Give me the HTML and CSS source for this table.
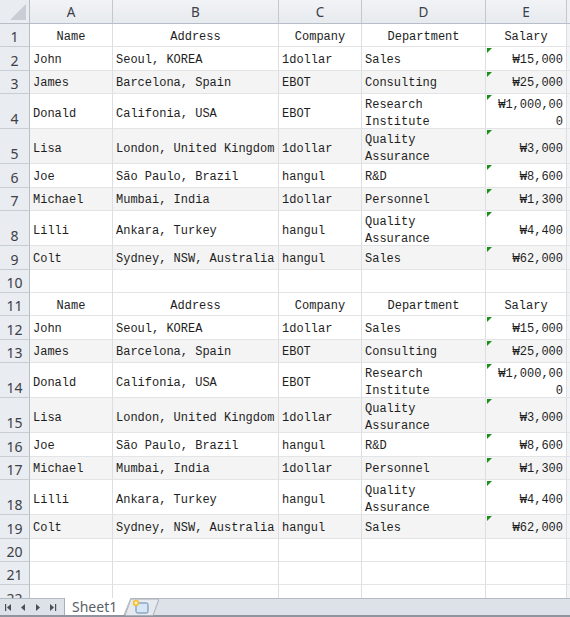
FILE: index.html
```html
<!DOCTYPE html>
<html>
<head>
<meta charset="utf-8">
<link rel="stylesheet" href="styles.css">
</head>
<body>
<div class="app">
  <div class="sheet">
    <div class="row head">
      <div class="corner"><span class="corner-tri"></span></div>
      <div class="colh">A</div><div class="colh">B</div><div class="colh">C</div><div class="colh">D</div><div class="colh">E</div><div class="colh end"></div>
    </div>

    <div class="row"><div class="rh">1</div><div class="c center">Name</div><div class="c center">Address</div><div class="c center">Company</div><div class="c center">Department</div><div class="c center">Salary</div><div class="c end"></div></div>
    <div class="row"><div class="rh">2</div><div class="c">John</div><div class="c">Seoul, KOREA</div><div class="c">1dollar</div><div class="c">Sales</div><div class="c num flag">₩15,000</div><div class="c end"></div></div>
    <div class="row alt"><div class="rh">3</div><div class="c">James</div><div class="c">Barcelona, Spain</div><div class="c">EBOT</div><div class="c">Consulting</div><div class="c num flag">₩25,000</div><div class="c end"></div></div>
    <div class="row tall"><div class="rh">4</div><div class="c">Donald</div><div class="c">Califonia, USA</div><div class="c">EBOT</div><div class="c multi">Research<br>Institute</div><div class="c num flag multi">₩1,000,00<br>0</div><div class="c end"></div></div>
    <div class="row tall alt"><div class="rh">5</div><div class="c">Lisa</div><div class="c">London, United Kingdom</div><div class="c">1dollar</div><div class="c multi">Quality<br>Assurance</div><div class="c num flag">₩3,000</div><div class="c end"></div></div>
    <div class="row"><div class="rh">6</div><div class="c">Joe</div><div class="c">São Paulo, Brazil</div><div class="c">hangul</div><div class="c">R&amp;D</div><div class="c num flag">₩8,600</div><div class="c end"></div></div>
    <div class="row alt"><div class="rh">7</div><div class="c">Michael</div><div class="c">Mumbai, India</div><div class="c">1dollar</div><div class="c">Personnel</div><div class="c num flag">₩1,300</div><div class="c end"></div></div>
    <div class="row tall"><div class="rh">8</div><div class="c">Lilli</div><div class="c">Ankara, Turkey</div><div class="c">hangul</div><div class="c multi">Quality<br>Assurance</div><div class="c num flag">₩4,400</div><div class="c end"></div></div>
    <div class="row alt"><div class="rh">9</div><div class="c">Colt</div><div class="c">Sydney, NSW, Australia</div><div class="c">hangul</div><div class="c">Sales</div><div class="c num flag">₩62,000</div><div class="c end"></div></div>
    <div class="row"><div class="rh">10</div><div class="c"></div><div class="c"></div><div class="c"></div><div class="c"></div><div class="c"></div><div class="c end"></div></div>

    <div class="row"><div class="rh">11</div><div class="c center">Name</div><div class="c center">Address</div><div class="c center">Company</div><div class="c center">Department</div><div class="c center">Salary</div><div class="c end"></div></div>
    <div class="row"><div class="rh">12</div><div class="c">John</div><div class="c">Seoul, KOREA</div><div class="c">1dollar</div><div class="c">Sales</div><div class="c num flag">₩15,000</div><div class="c end"></div></div>
    <div class="row alt"><div class="rh">13</div><div class="c">James</div><div class="c">Barcelona, Spain</div><div class="c">EBOT</div><div class="c">Consulting</div><div class="c num flag">₩25,000</div><div class="c end"></div></div>
    <div class="row tall"><div class="rh">14</div><div class="c">Donald</div><div class="c">Califonia, USA</div><div class="c">EBOT</div><div class="c multi">Research<br>Institute</div><div class="c num flag multi">₩1,000,00<br>0</div><div class="c end"></div></div>
    <div class="row tall alt"><div class="rh">15</div><div class="c">Lisa</div><div class="c">London, United Kingdom</div><div class="c">1dollar</div><div class="c multi">Quality<br>Assurance</div><div class="c num flag">₩3,000</div><div class="c end"></div></div>
    <div class="row"><div class="rh">16</div><div class="c">Joe</div><div class="c">São Paulo, Brazil</div><div class="c">hangul</div><div class="c">R&amp;D</div><div class="c num flag">₩8,600</div><div class="c end"></div></div>
    <div class="row alt"><div class="rh">17</div><div class="c">Michael</div><div class="c">Mumbai, India</div><div class="c">1dollar</div><div class="c">Personnel</div><div class="c num flag">₩1,300</div><div class="c end"></div></div>
    <div class="row tall"><div class="rh">18</div><div class="c">Lilli</div><div class="c">Ankara, Turkey</div><div class="c">hangul</div><div class="c multi">Quality<br>Assurance</div><div class="c num flag">₩4,400</div><div class="c end"></div></div>
    <div class="row alt"><div class="rh">19</div><div class="c">Colt</div><div class="c">Sydney, NSW, Australia</div><div class="c">hangul</div><div class="c">Sales</div><div class="c num flag">₩62,000</div><div class="c end"></div></div>
    <div class="row"><div class="rh">20</div><div class="c"></div><div class="c"></div><div class="c"></div><div class="c"></div><div class="c"></div><div class="c end"></div></div>
    <div class="row"><div class="rh">21</div><div class="c"></div><div class="c"></div><div class="c"></div><div class="c"></div><div class="c"></div><div class="c end"></div></div>
    <div class="row"><div class="rh">22</div><div class="c"></div><div class="c"></div><div class="c"></div><div class="c"></div><div class="c"></div><div class="c end"></div></div>
  </div>

  <div class="tabbar">
    <div class="nav">
      <svg width="62" height="18" viewBox="0 0 62 18">
        <rect x="5" y="6" width="1.2" height="7" fill="#4a4f57"/>
        <polygon points="7,9.5 11,6 11,13" fill="#4a4f57"/>
        <polygon points="21,9.5 25,6 25,13" fill="#4a4f57"/>
        <polygon points="36,6 40,9.5 36,13" fill="#4a4f57"/>
        <polygon points="50,6 54,9.5 50,13" fill="#4a4f57"/>
        <rect x="55" y="6" width="1.2" height="7" fill="#4a4f57"/>
      </svg>
    </div>
    <div class="tab">Sheet1</div>
    <div class="newtab">
      <svg width="34" height="18" viewBox="0 0 34 18">
        <polygon points="0,17.5 6,1 34,1 28,17.5" fill="#e6e9ee" stroke="#a9afb8" stroke-width="1"/>
        <rect x="11" y="5" width="12" height="10" rx="1.5" fill="#d7e6f5" stroke="#5f86b3" stroke-width="1"/>
        <circle cx="11" cy="5" r="3.2" fill="#f3c13a"/>
        <circle cx="11" cy="5" r="1.4" fill="#fff3c0"/>
      </svg>
    </div>
  </div>
</div>
</body>
</html>
```

FILE: styles.css
```css
* { box-sizing: border-box; }
html, body { margin: 0; padding: 0; background: #ffffff; }
.app { width: 570px; height: 617px; display: flex; flex-direction: column; overflow: hidden; }
.sheet { height: 598px; overflow: hidden; background: #fff; }
.row {
  display: grid;
  grid-template-columns: 30px 83px 166px 83px 124px 81px 1fr;
  height: 23.4px;
  font-family: "Liberation Mono", "DejaVu Sans Mono", monospace;
  font-size: 12px;
  color: #1e1e1e;
}
.row.tall { height: 35.1px; }
.row.alt .c { background: #f4f4f4; }
.row.head { height: 24px; }
.corner {
  position: relative;
  background: #e9ecf0;
  border-right: 1px solid #b8bec7;
  border-bottom: 1px solid #b8bec7;
}
.corner-tri {
  position: absolute; right: 3px; bottom: 3px;
  width: 0; height: 0;
  border-left: 16px solid transparent;
  border-bottom: 16px solid #c9ced6;
}
.colh {
  display: flex; align-items: center; justify-content: center;
  padding-top: 1px;
  background: linear-gradient(#f1f3f6, #e7eaee);
  border-right: 1px solid #c3c8cf;
  border-bottom: 1px solid #b8bec7;
  font-family: "Noto Sans", "DejaVu Sans", sans-serif;
  font-size: 13.5px;
  color: #3c4048;
}
.colh.end { border-right: none; background: #eef0f3; }
.rh {
  display: flex; align-items: flex-end; justify-content: center;
  padding-bottom: 0;
  background: #e9ecf0;
  border-right: 1px solid #b8bec7;
  border-bottom: 1px solid #c8cdd4;
  font-family: "Noto Sans", "DejaVu Sans", sans-serif;
  font-size: 14px;
  line-height: 19px;
  color: #3c4048;
}
.c {
  position: relative;
  display: flex; align-items: center;
  padding: 4px 3px 0 3px;
  border-right: 1px solid #dcdee2;
  border-bottom: 1px solid #e2e4e7;
  white-space: nowrap;
  overflow: hidden;
  line-height: 17px;
  background: #fff;
}
.row.tall .c { padding-top: 6px; }
.row.tall .c.multi { padding-top: 5px; }
.c.center { justify-content: center; }
.c.num { justify-content: flex-end; text-align: right; }
.c.end { border-right: none; background: #f3f4f6; }
.row.alt .c.end { background: #f3f4f6; }
.flag::before {
  content: "";
  position: absolute; left: 1px; top: 1px;
  width: 0; height: 0;
  border-top: 5px solid #1a8f1a;
  border-right: 5px solid transparent;
}
.tabbar {
  height: 19px;
  display: flex; align-items: stretch;
  background: #dde1e8;
  border-top: 1px solid #b4bac3;
  border-bottom: 2px solid #8e959f;
}
.nav { width: 64px; display: flex; align-items: center; }
.nav svg { display: block; }
.tab {
  position: relative;
  display: flex; align-items: center;
  padding: 0 6px 0 7px;
  margin-top: -1px;
  background: #ffffff;
  border-left: 1px solid #a9afb8;
  font-family: "Noto Sans", "DejaVu Sans", sans-serif;
  font-size: 14px;
  color: #5a5f66;
  z-index: 1;
}
.tab::after {
  content: "";
  position: absolute; top: 0; bottom: 0; right: -5px; width: 10px;
  background: #fff;
  border-right: 1px solid #a9afb8;
  transform: skewX(-22deg);
  z-index: -1;
}
.newtab { display: flex; align-items: center; margin-left: 2px; }
.newtab svg { display: block; }
```
